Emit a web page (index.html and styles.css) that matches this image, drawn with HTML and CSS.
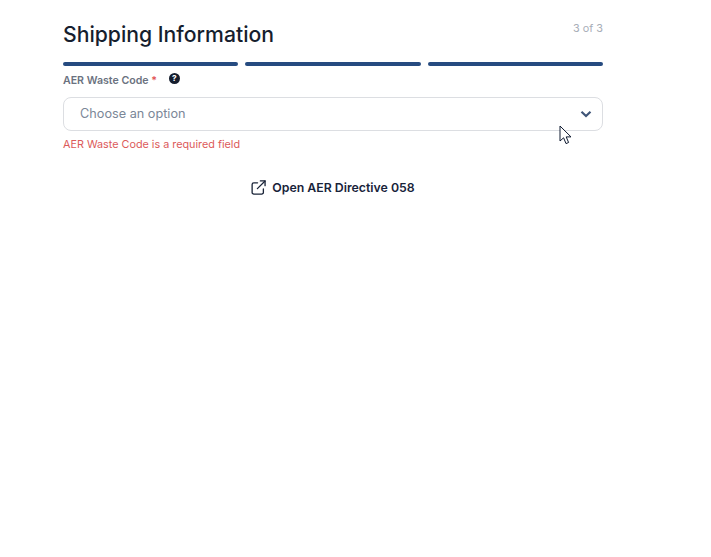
FILE: index.html
```html
<!DOCTYPE html>
<html lang="en">
<head>
    <meta charset="UTF-8">
    <meta name="viewport" content="width=device-width, initial-scale=1.0">
    <title>Shipping Information</title>
    <link rel="stylesheet" href="styles.css">
</head>
<body>
<div class="container">
    <div class="step-header">
        <h1>Shipping Information</h1>
        <span class="step-count">3 of 3</span>
    </div>
    <div class="progress">
        <div class="progress-bar"></div>
        <div class="progress-bar"></div>
        <div class="progress-bar"></div>
    </div>
    <div class="field-label">
        <label>AER Waste Code <span class="required">*</span></label>
        <span class="help-icon">?</span>
    </div>
    <div class="select-box">
        <span class="select-text">Choose an option</span>
        <svg class="select-arrow" width="12" height="8" viewBox="0 0 12 8" fill="none">
            <path d="M1.5 1.8L6 6L10.5 1.8" stroke="#3f5578" stroke-width="2.2"/>
        </svg>
    </div>
    <div class="error-text">AER Waste Code is a required field</div>
    <a class="directive-link" href="#">
        <svg class="link-icon" width="15" height="15" viewBox="0 0 16 16" fill="none" stroke="#1a2438" stroke-width="1.4" stroke-linecap="round" stroke-linejoin="round">
            <path d="M7 3H3a1.8 1.8 0 0 0-1.8 1.8v8.4A1.8 1.8 0 0 0 3 15h8.4a1.8 1.8 0 0 0 1.8-1.8V9.5"/>
            <path d="M10 1h5v5"/>
            <path d="M15 1L6.8 9.2"/>
        </svg>
        <span>Open AER Directive 058</span>
    </a>
</div>
<svg class="cursor" width="14" height="21" viewBox="0 0 14 21">
    <path d="M1 1V16L4.6 12.8L7 18.6L9.6 17.5L7.2 11.9H12L1 1Z" fill="#fff" stroke="#0f1a30" stroke-width="1"/>
</svg>
</body>
</html>
```

FILE: styles.css
```css
body {
    font-family: Inter, Arial, sans-serif;
    background-color: #fff;
    margin: 0;
    padding: 0;
}

.container {
    width: 540px;
    margin-left: 63px;
    padding-top: 20px;
}

.step-header {
    display: flex;
    justify-content: space-between;
    align-items: flex-start;
    height: 42px;
}

h1 {
    margin: 0;
    font-size: 21.2px;
    line-height: 29px;
    font-weight: 500;
    color: #161e2e;
}

.step-count {
    font-size: 10.8px;
    line-height: 18px;
    color: #a8aeb8;
}

.progress {
    display: flex;
    gap: 7px;
}

.progress-bar {
    flex: 1;
    height: 4px;
    border-radius: 2px;
    background-color: #264b80;
}

.field-label {
    display: flex;
    align-items: center;
    gap: 12px;
    height: 20px;
    margin-top: 4px;
    font-size: 10.6px;
    font-weight: 600;
    color: #6b7280;
}

.required {
    color: #e25555;
}

.help-icon {
    width: 11px;
    height: 11px;
    margin-top: -3px;
    border-radius: 50%;
    background-color: #161e2e;
    color: #fff;
    font-size: 8px;
    font-weight: 800;
    line-height: 11px;
    text-align: center;
}

.select-box {
    display: flex;
    justify-content: space-between;
    align-items: center;
    box-sizing: border-box;
    height: 34px;
    margin-top: 7px;
    padding: 0 10px 0 16px;
    border: 1px solid #dcdee2;
    border-radius: 8px;
}

.select-text {
    margin-top: -2px;
    font-size: 12.7px;
    color: #7b8798;
}

.error-text {
    margin-top: 6px;
    font-size: 10.8px;
    line-height: 15px;
    color: #dc5a5a;
}

.directive-link {
    display: flex;
    justify-content: center;
    align-items: center;
    gap: 6px;
    margin-top: 27px;
    font-size: 12.3px;
    font-weight: 600;
    color: #18233a;
    text-decoration: none;
}

.link-icon {
    margin-top: 1px;
}

/* mouse pointer sitting over the page */
.cursor {
    position: absolute;
    left: 559px;
    top: 125px;
}
```
